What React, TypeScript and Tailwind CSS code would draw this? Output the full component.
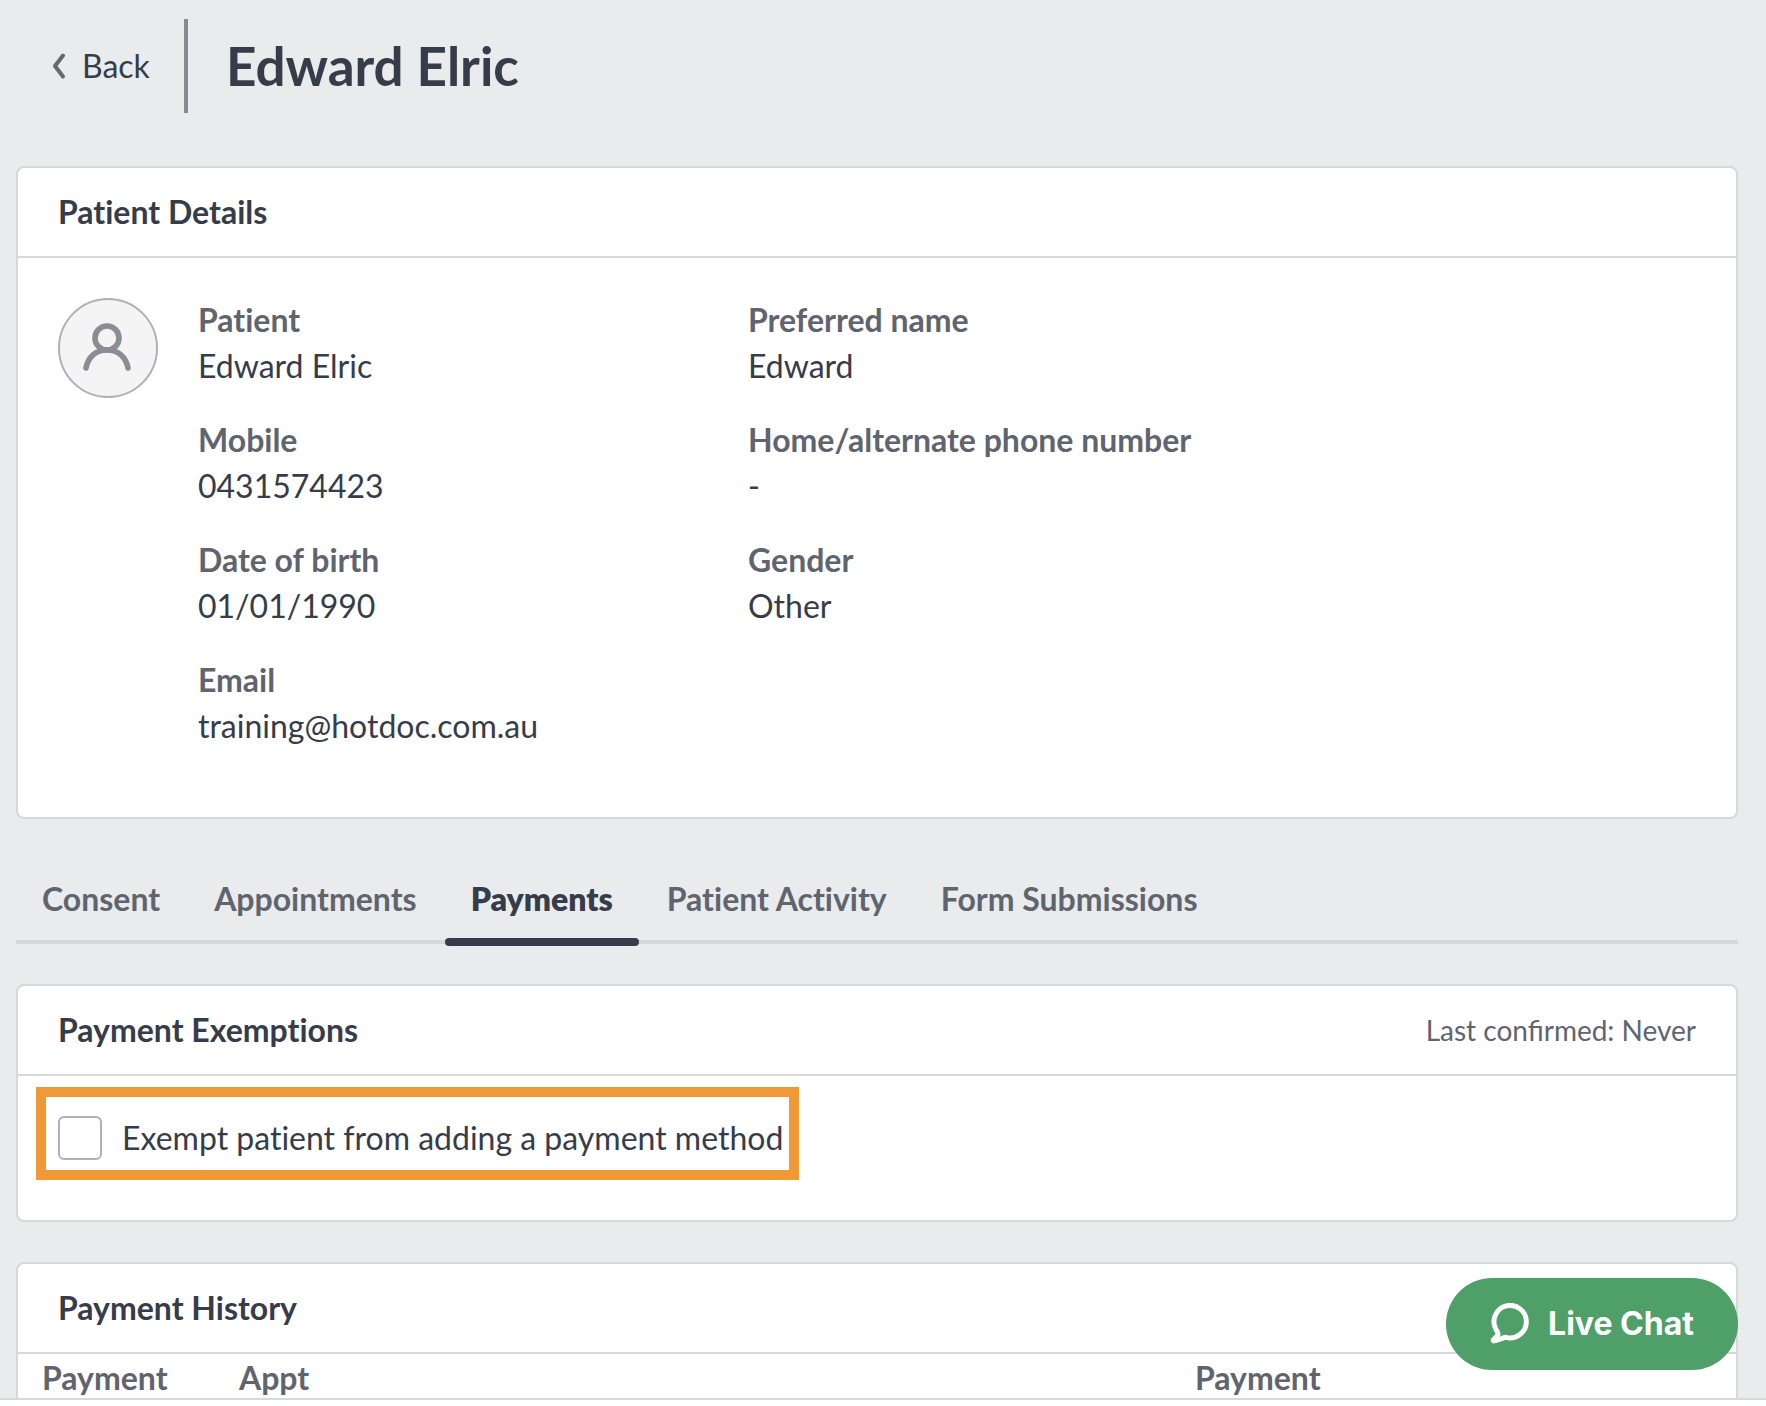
import { useState, type ReactNode } from "react";

const details = [
  { label: "Patient", value: "Edward Elric" },
  { label: "Preferred name", value: "Edward" },
  { label: "Mobile", value: "0431574423" },
  { label: "Home/alternate phone number", value: "-" },
  { label: "Date of birth", value: "01/01/1990" },
  { label: "Gender", value: "Other" },
  { label: "Email", value: "training@hotdoc.com.au" },
];

const tabs = ["Consent", "Appointments", "Payments", "Patient Activity", "Form Submissions"];

function Card({ title, aside, children }: { title: string; aside?: string; children: ReactNode }) {
  return (
    <section className="rounded-lg border-2 border-[#d6d8da] bg-white">
      <header className="flex h-[90px] items-center justify-between border-b-2 border-[#d6d8da] px-10">
        <h2 className="text-[32px] leading-10 font-bold">{title}</h2>
        {aside && (
          <span className="text-[28px] leading-10 text-[#5f646f] [font-variant-ligatures:normal]">{aside}</span>
        )}
      </header>
      {children}
    </section>
  );
}

function PageHeader() {
  return (
    <div className="flex h-[94px] items-center">
      <a href="#patients" className="flex items-center gap-4 pl-9 text-[32px] leading-10">
        <svg width="14" height="26" viewBox="0 0 14 26" fill="none" stroke="#666973" strokeWidth="4" strokeLinecap="round" strokeLinejoin="round" aria-hidden="true">
          <path d="M11 2.5 3 13l8 10.5" />
        </svg>
        Back
      </a>
      <div className="ml-[34px] h-full w-1 bg-[#888992]" />
      <h1 className="ml-[38px] text-[53px] leading-[64px] font-bold">Edward Elric</h1>
    </div>
  );
}

function Avatar() {
  return (
    <div className="flex size-[100px] shrink-0 items-center justify-center rounded-full border-2 border-[#b1b0b7] bg-[#f4f4f5]">
      <svg width="50" height="50" viewBox="0 0 50 50" fill="none" stroke="#8a8d93" strokeWidth="5.6" strokeLinecap="round" aria-hidden="true">
        <circle cx="24" cy="15" r="12" />
        <path d="M3 45C5 34 13 27 24 27s19 7 21 18" />
      </svg>
    </div>
  );
}

export default function App() {
  const [activeTab, setActiveTab] = useState("Payments");
  const [exempt, setExempt] = useState(false);

  return (
    <div className="flex h-screen flex-col overflow-hidden bg-[#e9ebec] font-['Lato',sans-serif] text-[#363c49] [font-variant-ligatures:no-common-ligatures]">
      <main className="min-h-0 flex-1 overflow-hidden pt-[19px] pr-7 pl-4">
        <PageHeader />

        <div className="mt-[53px]">
          <Card title="Patient Details">
            <div className="flex gap-10 p-10">
              <Avatar />
              <dl className="-mt-px grid grid-cols-[550px_1fr] text-[32px] leading-[46px]">
                {details.map((item) => (
                  <div key={item.label} className="mb-7">
                    <dt className="font-bold text-[#5f646f]">{item.label}</dt>
                    <dd>{item.value}</dd>
                  </div>
                ))}
              </dl>
            </div>
          </Card>
        </div>

        {/* Tabs */}
        <div role="tablist" className="mt-[39px] flex h-[86px] gap-0.5 border-b-4 border-[#d6d8da]">
          {tabs.map((tab) => {
            const active = tab === activeTab;
            return (
              <button
                key={tab}
                type="button"
                role="tab"
                aria-selected={active}
                onClick={() => setActiveTab(tab)}
                className={`relative px-[26px] text-[32px] leading-10 ${
                  active ? "font-extrabold" : "font-bold text-[#5f646f]"
                }`}
              >
                {tab}
                {active && <span className="absolute inset-x-0 -bottom-1.5 h-2 rounded bg-[#363c49]" />}
              </button>
            );
          })}
        </div>

        <div className="mt-10 flex flex-col gap-10">
          <Card title="Payment Exemptions" aside="Last confirmed: Never">
            <div className="px-[18px] pt-[11px] pb-10">
              <label className="flex w-fit items-center gap-5 border-10 border-[#ef9937] pt-[19px] pr-1.5 pb-2.5 pl-3 text-[32px] leading-10">
                <input
                  type="checkbox"
                  checked={exempt}
                  onChange={(e) => setExempt(e.target.checked)}
                  className="size-11 appearance-none rounded-md border-2 border-[#b1b0b7] bg-white checked:bg-[#363c49]"
                />
                Exempt patient from adding a payment method
              </label>
            </div>
          </Card>

          <Card title="Payment History">
            <table className="w-full table-fixed text-left text-[32px] leading-10 text-[#5f646f]">
              <thead>
                <tr>
                  <th className="w-[197px] pt-1 pl-6 font-bold">Payment</th>
                  <th className="pt-1 pl-6 font-bold">Appt</th>
                  <th className="w-[565px] pt-1 pl-6 font-bold">Payment</th>
                </tr>
              </thead>
              <tbody>
                <tr>
                  <td colSpan={3} className="h-20" />
                </tr>
              </tbody>
            </table>
          </Card>
        </div>
      </main>
      <div className="h-2 shrink-0 border-t-2 border-[#d6d8da] bg-white" />

      <button
        type="button"
        className="fixed right-7 bottom-9 flex h-[92px] items-center gap-4 rounded-full bg-[#4f9f69] px-11 font-['Inter',sans-serif] text-[32px] leading-10 font-bold text-white"
      >
        <svg width="42" height="42" viewBox="0 0 42 42" fill="none" stroke="currentColor" strokeWidth="5" strokeLinecap="round" strokeLinejoin="round" aria-hidden="true">
          <path d="M6 26.500A16.200 16.200 0 1 1 16 34.300C12 34.800 8 38 3.500 38C2 37 6.500 34.500 7.800 32C8.500 30 7.500 28.500 6 26.500Z" />
        </svg>
        Live Chat
      </button>
    </div>
  );
}
